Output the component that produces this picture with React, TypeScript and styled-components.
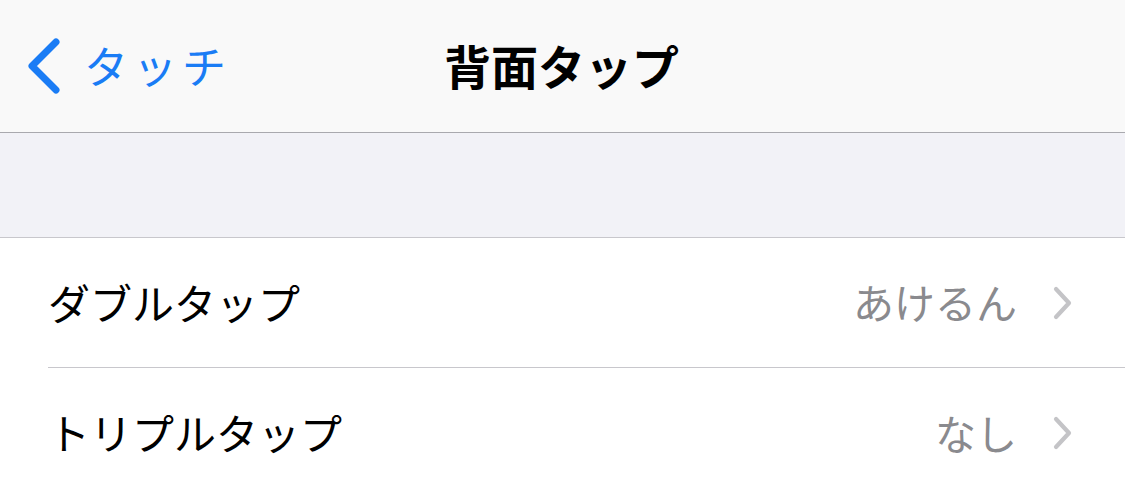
import React from "react";
import styled, { createGlobalStyle } from "styled-components";

const Global = createGlobalStyle`
  html, body { margin: 0; padding: 0; background: #ffffff; overflow: hidden; }
  body { font-family: "Noto Sans CJK JP", "Noto Sans", sans-serif; }
`;

const Page = styled.div`
  width: 1125px;
  height: 496px;
  display: flex;
  flex-direction: column;
  background: #ffffff;
`;

const NavBar = styled.header`
  height: 133px;
  flex: none;
  box-sizing: border-box;
  border-bottom: 1px solid #a9a9ae;
  background: #f9f9f9;
  display: grid;
  grid-template-columns: 1fr auto 1fr;
  align-items: center;
`;

const BackButton = styled.div`
  display: flex;
  align-items: center;
  gap: 22px;
  padding-left: 26px;
  color: #1a7cf5;
`;

const BackLabel = styled.span`
  font-size: 44px;
  line-height: 1;
  letter-spacing: 5px;
  padding-bottom: 2px;
`;

const Title = styled.h1`
  margin: 0;
  font-size: 47px;
  font-weight: 700;
  line-height: 1;
  color: #000000;
  padding-bottom: 4px;
  padding-right: 2px;
`;

const Spacer = styled.div`
  height: 104px;
  flex: none;
  background: #f2f2f7;
  border-bottom: 1px solid #c8c7cc;
`;

const List = styled.div`
  display: flex;
  flex-direction: column;
  background: #ffffff;
`;

const Row = styled.div<{ $divider?: boolean }>`
  height: 130px;
  box-sizing: border-box;
  margin-left: 48px;
  padding-right: 52px;
  display: flex;
  align-items: center;
  border-bottom: ${(p) => (p.$divider ? "1px solid #c8c7cc" : "none")};
`;

const Label = styled.span`
  flex: 1;
  font-size: 42px;
  line-height: 1;
  color: #000000;
  padding-bottom: 2px;
`;

const Value = styled.span`
  font-size: 41px;
  line-height: 1;
  color: #8a8a8e;
  margin-right: 36px;
  padding-bottom: 2px;
`;

const BackChevron = () => (
  <svg width="36" height="56" viewBox="0 0 36 56">
    <path d="M30 4 L6 28 L30 52" fill="none" stroke="currentColor" strokeWidth="7" strokeLinecap="round" strokeLinejoin="round" />
  </svg>
);

const Disclosure = () => (
  <svg width="20" height="34" viewBox="0 0 20 34">
    <path d="M3 3 L16 17 L3 31" fill="none" stroke="#c4c4c7" strokeWidth="4.2" strokeLinecap="round" strokeLinejoin="round" />
  </svg>
);

export default function App() {
  return (
    <>
      <Global />
      <Page>
        <NavBar>
          <BackButton>
            <BackChevron />
            <BackLabel>タッチ</BackLabel>
          </BackButton>
          <Title>背面タップ</Title>
          <div />
        </NavBar>
        <Spacer />
        <List>
          <Row $divider>
            <Label>ダブルタップ</Label>
            <Value>あけるん</Value>
            <Disclosure />
          </Row>
          <Row>
            <Label>トリプルタップ</Label>
            <Value>なし</Value>
            <Disclosure />
          </Row>
        </List>
      </Page>
    </>
  );
}
